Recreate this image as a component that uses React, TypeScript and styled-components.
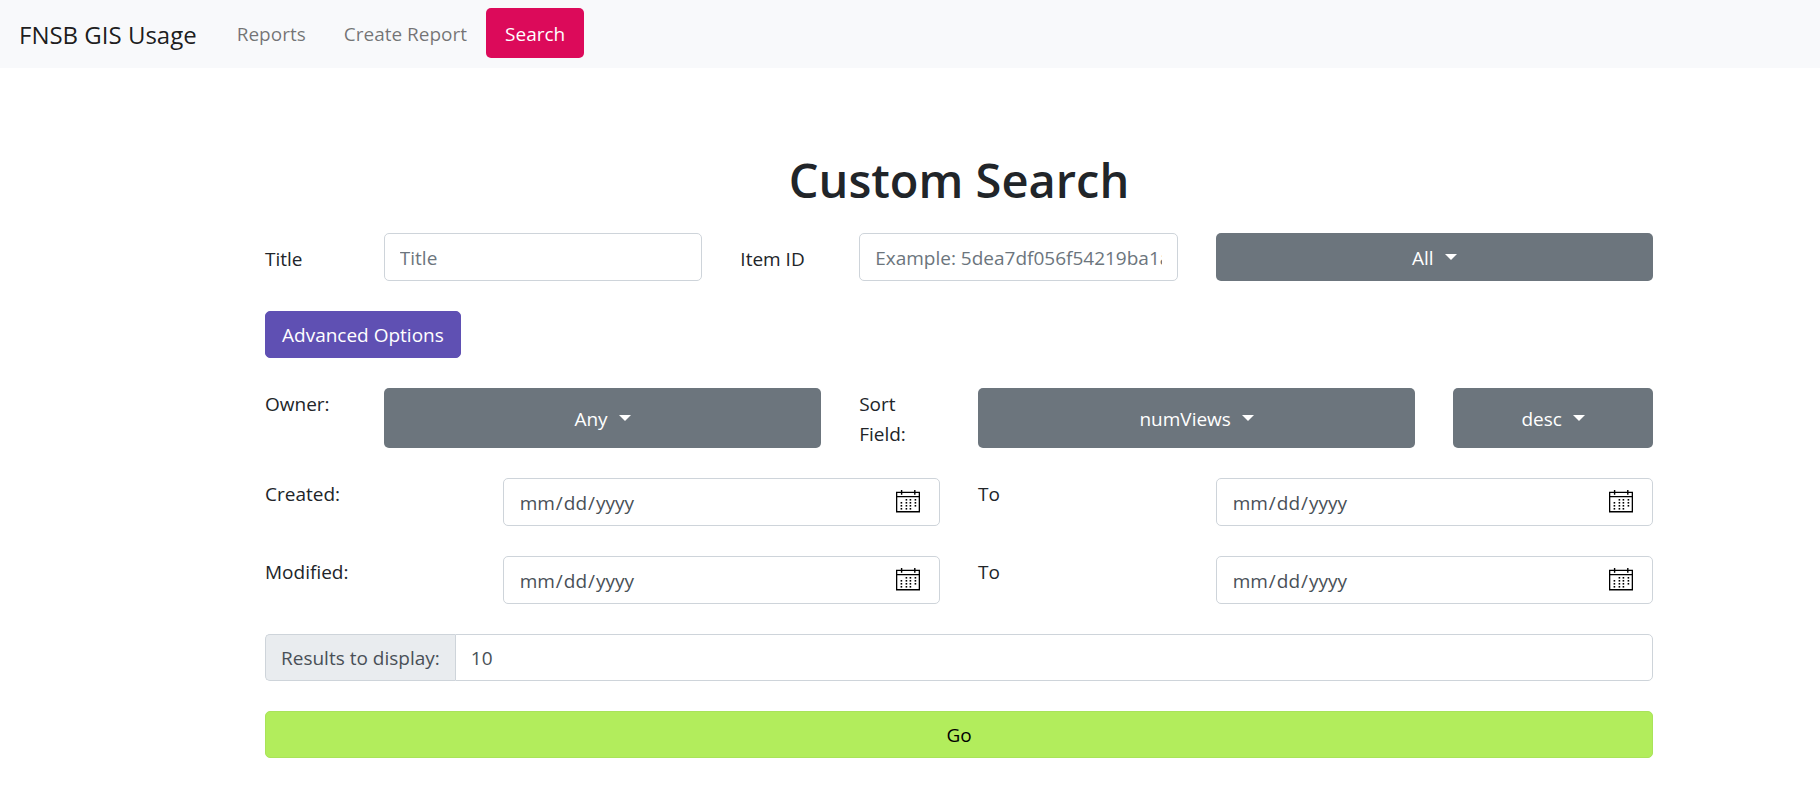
import React, { useId, useState } from "react";
import styled, { createGlobalStyle } from "styled-components";

const GlobalStyle = createGlobalStyle`
  *, *::before, *::after { box-sizing: border-box; }
  body {
    margin: 0;
    background: #fff;
    color: #212529;
    font-family: "Segoe UI", "Open Sans", "Noto Sans", sans-serif;
    font-size: 19px;
    line-height: 30px;
  }
  button, input, select { font: inherit; margin: 0; }
`;

const Navbar = styled.nav`
  display: flex;
  align-items: center;
  padding: 8px 19px;
  min-height: 68px;
  background: #f8f9fb;
`;

const Brand = styled.a`
  margin-right: 21px;
  padding-top: 2px;
  font-size: 24px;
  color: rgba(0, 0, 0, 0.9);
  text-decoration: none;
`;

const NavList = styled.ul`
  display: flex;
  align-items: flex-start;
  margin: 0;
  padding: 0 0 2px;
  list-style: none;
`;

const NavLink = styled.a<{ $active?: boolean }>`
  display: block;
  padding: 11px 19px 9px;
  border-radius: 5px;
  color: ${(p) => (p.$active ? "#fff" : "rgba(0, 0, 0, 0.55)")};
  background: ${(p) => (p.$active ? "#dc0a5a" : "transparent")};
  text-decoration: none;
`;

const Main = styled.main`
  padding: 82px 18px 30px 116px;
`;

const SearchForm = styled.form`
  display: flex;
  flex-direction: column;
  gap: 30px;
  max-width: 1388px;
  margin: 0 auto;
`;

const Heading = styled.h1`
  margin: 0 0 -7px;
  font-size: 47px;
  font-weight: 600;
  line-height: 60px;
  text-align: center;
`;

const Row = styled.div`
  display: grid;
  grid-template-columns: repeat(12, minmax(0, 1fr));
  column-gap: 38px;
`;

const Label = styled.label<{ $span?: number; $centered?: boolean }>`
  grid-column: span ${(p) => p.$span ?? 1};
  align-self: ${(p) => (p.$centered ? "center" : "start")};
  padding-top: ${(p) => (p.$centered ? "2px" : "1px")};
  margin-bottom: -1px;
`;

const Field = styled.input<{ $span?: number }>`
  grid-column: span ${(p) => p.$span ?? 3};
  width: 100%;
  height: 48px;
  padding: 9px 15px 7px;
  border: 1px solid #ced4da;
  border-radius: 5px;
  background: #fff;
  color: #495057;
  outline-offset: 2px;

  &::placeholder { color: #6c757d; opacity: 1; }
`;

const DateBox = styled.div`
  display: grid;
  grid-column: span 4;
  align-items: center;
`;

const DateField = styled(Field)`
  grid-area: 1 / 1;

  &::-webkit-calendar-picker-indicator {
    width: 24px;
    height: 24px;
    opacity: 0;
  }
`;

const CalendarSvg = styled.svg`
  grid-area: 1 / 1;
  justify-self: end;
  margin: 0 20px 2px 0;
  pointer-events: none;
`;

const SelectBox = styled.div<{ $span: number }>`
  display: grid;
  grid-column: span ${(p) => p.$span};
  min-height: 48px;
  border-radius: 5px;
  background: #6c757d;
  color: #fff;
`;

const Select = styled.select`
  grid-area: 1 / 1;
  width: 100%;
  padding: 1px 23px 0 0;
  border: 0;
  border-radius: 5px;
  appearance: none;
  background: transparent;
  color: inherit;
  text-align: center;
  text-align-last: center;
  cursor: pointer;

  option { color: #212529; }
`;

const CaretLayer = styled.span`
  grid-area: 1 / 1;
  display: flex;
  align-items: center;
  justify-content: center;
  gap: 11px;
  pointer-events: none;
`;

const CaretSpacer = styled.span`
  visibility: hidden;
`;

const Caret = styled.span`
  border-top: 6px solid currentColor;
  border-left: 6px solid transparent;
  border-right: 6px solid transparent;
`;

const Button = styled.button<{ $variant: "advanced" | "go" }>`
  align-self: ${(p) => (p.$variant === "go" ? "stretch" : "flex-start")};
  height: 47px;
  padding: 0 16px;
  border: 1px solid ${(p) => (p.$variant === "go" ? "#a9e35a" : "#5f50b3")};
  border-radius: 5px;
  background: ${(p) => (p.$variant === "go" ? "#b2ed5c" : "#5f50b3")};
  color: ${(p) => (p.$variant === "go" ? "#000" : "#fff")};
  cursor: pointer;
`;

const InputGroup = styled.div`
  display: flex;
  height: 47px;
`;

const GroupLabel = styled.label`
  flex: none;
  padding: 8px 15px 7px;
  border: 1px solid #ced4da;
  border-right: 0;
  border-radius: 5px 0 0 5px;
  background: #e9ecef;
  color: #495057;
`;

const GroupField = styled(Field)`
  flex: 1;
  min-width: 0;
  height: 100%;
  padding-top: 8px;
  border-radius: 0 5px 5px 0;
`;

const dots = [
  [10, 9], [14, 9], [19, 9],
  [5, 12], [10, 12], [14, 12], [19, 12],
  [5, 15], [10, 15], [14, 15], [19, 15],
  [5, 18], [10, 18], [14, 18],
];

function CalendarIcon() {
  return (
    <CalendarSvg width="24" height="23" viewBox="0 0 24 23" aria-hidden="true">
      <path d="M.6 2.4h22.8v19.4H.6zM.6 6.6h22.8M5.6 0v4.8M18.8 0v4.8" fill="none" stroke="#000" strokeWidth="1.4" />
      {dots.map(([x, y]) => (
        <rect key={`${x}-${y}`} x={x - 0.4} y={y} width="1.6" height="1.6" fill="#000" />
      ))}
    </CalendarSvg>
  );
}

function Dropdown({ id, label, span, options }: { id: string; label?: string; span: number; options: string[] }) {
  const [value, setValue] = useState(options[0]);
  return (
    <SelectBox $span={span}>
      <Select id={id} aria-label={label} value={value} onChange={(e) => setValue(e.target.value)}>
        {options.map((o) => (
          <option key={o}>{o}</option>
        ))}
      </Select>
      <CaretLayer aria-hidden="true">
        <CaretSpacer>{value}</CaretSpacer>
        <Caret />
      </CaretLayer>
    </SelectBox>
  );
}

function DateRange({ label }: { label: string }) {
  const id = useId();
  return (
    <Row>
      <Label $span={2} htmlFor={`${id}-from`}>{label}</Label>
      <DateBox>
        <DateField id={`${id}-from`} type="date" />
        <CalendarIcon />
      </DateBox>
      <Label $span={2} htmlFor={`${id}-to`}>To</Label>
      <DateBox>
        <DateField id={`${id}-to`} type="date" />
        <CalendarIcon />
      </DateBox>
    </Row>
  );
}

export default function App() {
  const [advanced, setAdvanced] = useState(true);
  return (
    <>
      <GlobalStyle />
      <Navbar>
        <Brand href="#">FNSB GIS Usage</Brand>
        <NavList>
          <li><NavLink href="#reports">Reports</NavLink></li>
          <li><NavLink href="#create">Create Report</NavLink></li>
          <li><NavLink href="#search" $active aria-current="page">Search</NavLink></li>
        </NavList>
      </Navbar>
      <Main>
        <SearchForm onSubmit={(e) => e.preventDefault()}>
          <Heading>Custom Search</Heading>
          <Row>
            <Label $centered htmlFor="title">Title</Label>
            <Field id="title" type="text" placeholder="Title" />
            <Label $centered htmlFor="item-id">Item ID</Label>
            <Field id="item-id" type="text" placeholder="Example: 5dea7df056f54219ba1a" />
            <Dropdown id="item-type" label="Item type" span={4} options={["All"]} />
          </Row>
          <Button type="button" $variant="advanced" aria-expanded={advanced} onClick={() => setAdvanced(!advanced)}>
            Advanced Options
          </Button>
          {advanced && (
            <>
              <Row>
                <Label htmlFor="owner">Owner:</Label>
                <Dropdown id="owner" span={4} options={["Any"]} />
                <Label htmlFor="sort-field">Sort Field:</Label>
                <Dropdown id="sort-field" span={4} options={["numViews"]} />
                <Dropdown id="sort-order" label="Sort order" span={2} options={["desc", "asc"]} />
              </Row>
              <DateRange label="Created:" />
              <DateRange label="Modified:" />
              <InputGroup>
                <GroupLabel htmlFor="results">Results to display:</GroupLabel>
                <GroupField id="results" type="text" inputMode="numeric" defaultValue="10" />
              </InputGroup>
            </>
          )}
          <Button type="submit" $variant="go">Go</Button>
        </SearchForm>
      </Main>
    </>
  );
}
